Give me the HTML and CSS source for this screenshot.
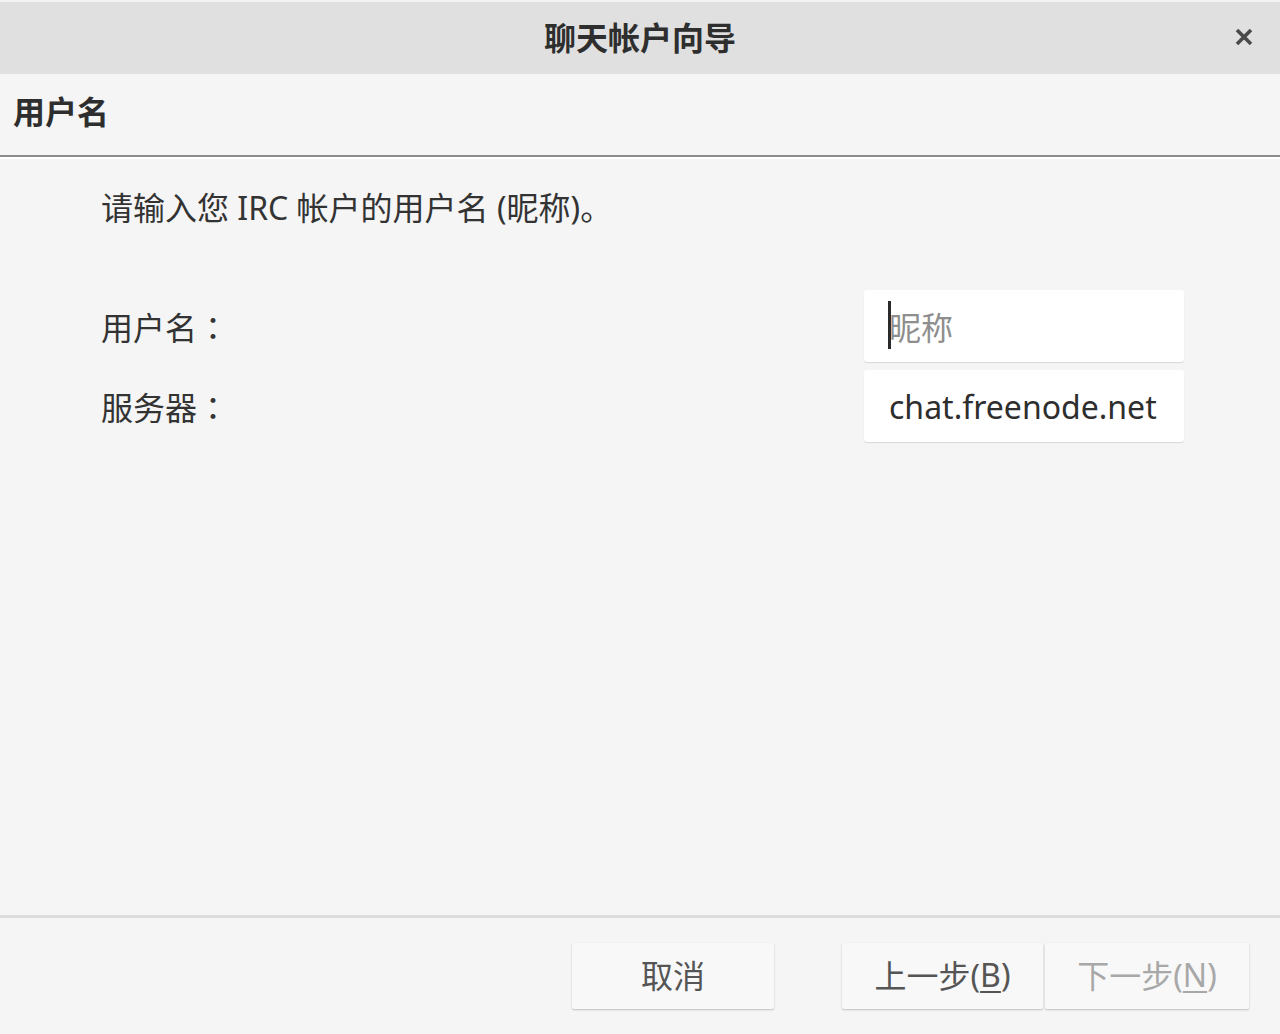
FILE: index.html
```html
<!DOCTYPE html>
<html lang="zh-CN">
<head>
<meta charset="utf-8">
<link rel="stylesheet" href="styles.css">
</head>
<body>
<div class="window">
  <div class="titlebar">
    <div class="title">聊天帐户向导</div>
    <div class="close">
      <svg width="20" height="20" viewBox="0 0 20 20"><path d="M3 3 L17 17 M17 3 L3 17" stroke="#4a4a4a" stroke-width="3.6" stroke-linecap="butt"/></svg>
    </div>
  </div>
  <div class="pagehead">用户名</div>
  <div class="content">
    <p class="desc">请输入您 IRC 帐户的用户名 (昵称)。</p>
    <div class="form">
      <div class="row">
        <span class="label">用户名<span class="colon" lang="zh-TW">：</span></span>
        <div class="input"><span class="caret"></span><span class="placeholder">昵称</span></div>
      </div>
      <div class="row">
        <span class="label">服务器<span class="colon" lang="zh-TW">：</span></span>
        <div class="input"><span class="value">chat.freenode.net</span></div>
      </div>
    </div>
  </div>
  <div class="footer">
    <div class="btn cancel">取消</div>
    <div class="btn back">上一步(<u>B</u>)</div>
    <div class="btn next disabled">下一步(<u>N</u>)</div>
  </div>
</div>
</body>
</html>
```

FILE: styles.css
```css
* { box-sizing: border-box; }
html, body { margin: 0; padding: 0; }
body {
  width: 1280px;
  height: 1034px;
  background: #f5f5f5;
  font-family: "Noto Sans", "Noto Sans CJK SC", sans-serif;
  color: #333;
  overflow: hidden;
}
.window {
  height: 1034px;
  display: flex;
  flex-direction: column;
}
.titlebar {
  height: 74px;
  background: #e0e0e0;
  border-top: 2px solid #f2f2f2;
  display: flex;
  align-items: center;
  justify-content: center;
  position: relative;
}
.title {
  font-family: "Noto Sans CJK SC", sans-serif;
  font-weight: bold;
  font-size: 32px;
  color: #2e2e2e;
  margin-top: -5px;
}
.close {
  position: absolute;
  right: 26px;
  top: 25px;
  width: 20px;
  height: 20px;
}
.close svg { display: block; }
.pagehead {
  height: 83px;
  padding: 0 0 9px 13px;
  display: flex;
  align-items: center;
  font-family: "Noto Sans CJK SC", sans-serif;
  font-weight: bold;
  font-size: 32px;
  color: #2e2e2e;
  border-bottom: 2px solid #8c8c8c;
  box-shadow: 0 2px 0 #ffffff;
  background: #f5f5f5;
}
.content {
  flex: 1;
  padding: 0 96px 0 101px;
}
.desc {
  margin: 26px 0 0 0;
  font-size: 32px;
  line-height: 50px;
  color: #333;
}
.form {
  margin-top: 57px;
  display: flex;
  flex-direction: column;
  gap: 8px;
}
.row {
  display: flex;
  justify-content: space-between;
  align-items: center;
}
.label {
  font-family: "Noto Sans CJK SC", sans-serif;
  font-size: 32px;
  color: #333;
}
.colon {
  font-family: "Noto Sans CJK TC", "Noto Sans CJK JP", sans-serif;
}
.input {
  width: 320px;
  height: 72px;
  background: #ffffff;
  border-radius: 3px;
  box-shadow: 0 1px 1px rgba(0,0,0,0.12);
  display: flex;
  align-items: center;
  padding-left: 25px;
  position: relative;
}
.caret {
  position: absolute;
  left: 24px;
  top: 11px;
  width: 3px;
  height: 48px;
  background: #2a2a2a;
}
.placeholder {
  font-size: 32px;
  color: #8e8e8e;
  font-family: "Noto Sans CJK SC", sans-serif;
}
.value {
  font-size: 32px;
  color: #2e2e2e;
}
.footer {
  height: 119px;
  border-top: 3px solid #dcdcdc;
  display: flex;
  justify-content: flex-end;
  align-items: flex-start;
  padding: 25px 31px 0 0;
}
.btn {
  height: 66px;
  background: #f8f8f8;
  border-radius: 2px;
  box-shadow: 0 1px 2px rgba(0,0,0,0.22);
  display: flex;
  align-items: center;
  justify-content: center;
  font-size: 32px;
  color: #555;
  padding-bottom: 4px;
}
.btn u { text-decoration-thickness: 2px; text-underline-offset: 4px; }
.cancel { width: 202px; margin-right: 68px; }
.back { width: 201px; margin-right: 2px; }
.next { width: 204px; }
.disabled { color: #a8a8a8; }
```
